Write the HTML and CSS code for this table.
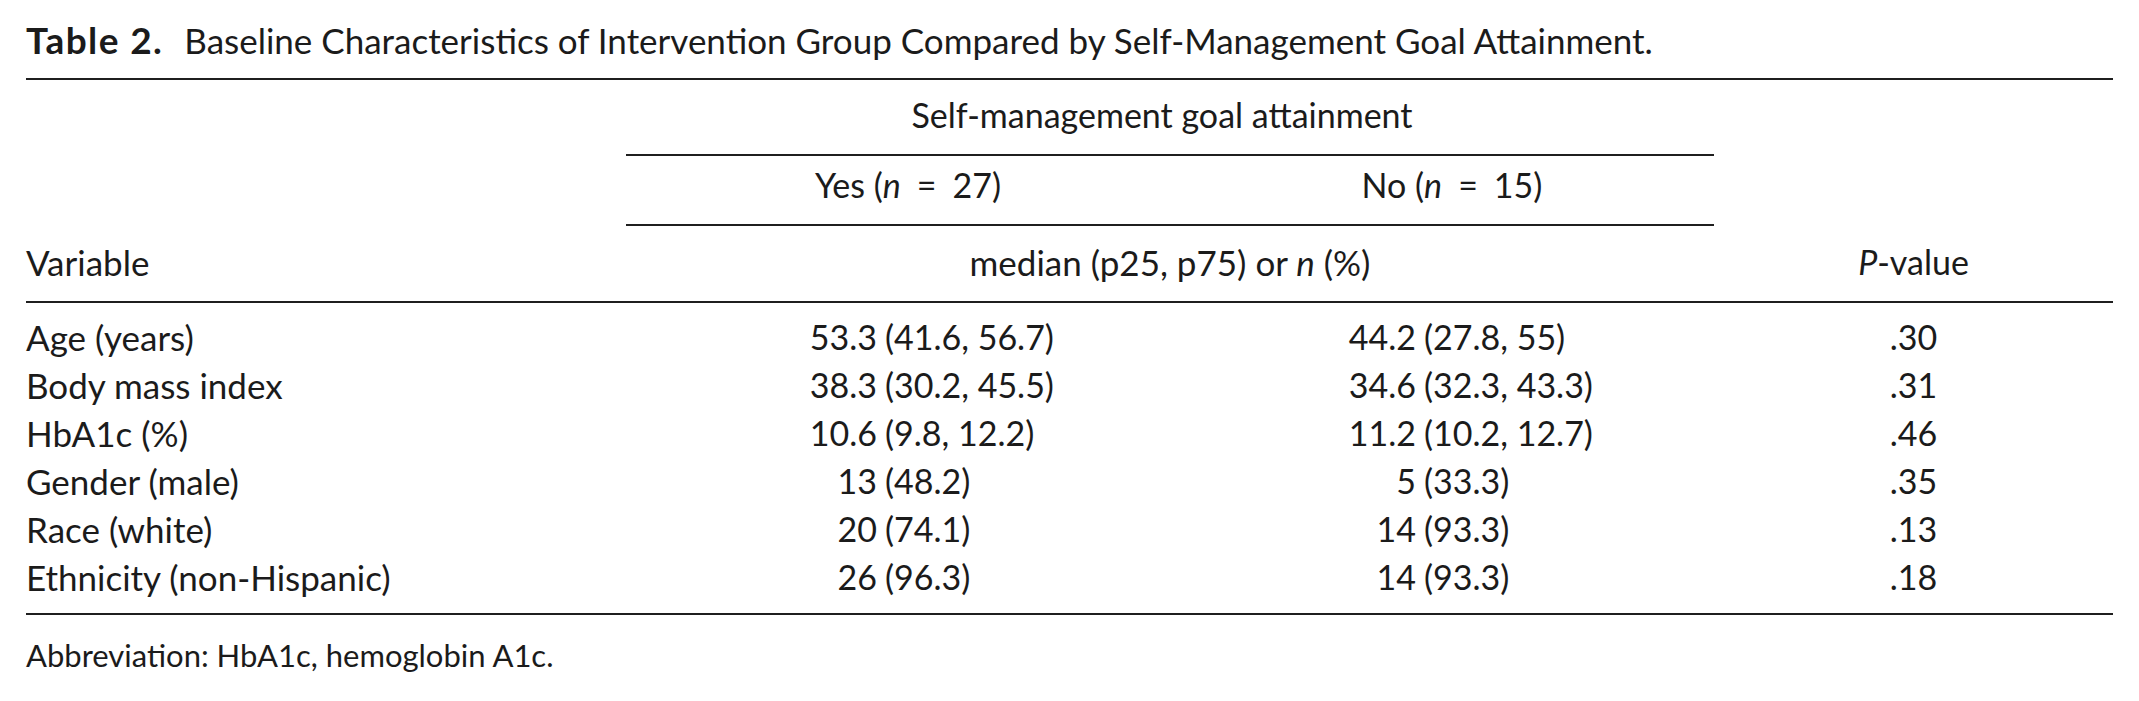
FILE: index.html
```html
<!DOCTYPE html>
<html lang="en">
<head>
<meta charset="utf-8">
<title>Table 2</title>
<link rel="stylesheet" href="styles.css">
</head>
<body>
<div class="figure">
  <p class="caption"><span class="label">Table 2.</span>Baseline Characteristics of Intervention Group Compared by Self-Management Goal Attainment.</p>
  <table class="data">
    <colgroup>
      <col class="c-var">
      <col class="c-yes">
      <col class="c-no">
      <col class="c-p">
    </colgroup>
    <thead>
      <tr class="hr1">
        <th></th>
        <th colspan="2" class="ruled span">Self-management goal attainment</th>
        <th></th>
      </tr>
      <tr class="hr2">
        <th></th>
        <th class="ruled">Yes (<i>n</i><span class="eq">=</span>27)</th>
        <th class="ruled">No (<i>n</i><span class="eq">=</span>15)</th>
        <th></th>
      </tr>
      <tr class="hr3">
        <th class="left wide">Variable</th>
        <th colspan="2" class="wide">median (p25, p75) or <i>n</i> (%)</th>
        <th><i>P</i>-value</th>
      </tr>
    </thead>
    <tbody>
      <tr>
        <td class="left wide">Age (years)</td>
        <td class="yes"><span class="n">53.3</span><span class="r">(41.6, 56.7)</span></td>
        <td class="no"><span class="n">44.2</span><span class="r">(27.8, 55)</span></td>
        <td class="p">.30</td>
      </tr>
      <tr>
        <td class="left wide">Body mass index</td>
        <td class="yes"><span class="n">38.3</span><span class="r">(30.2, 45.5)</span></td>
        <td class="no"><span class="n">34.6</span><span class="r">(32.3, 43.3)</span></td>
        <td class="p">.31</td>
      </tr>
      <tr>
        <td class="left wide">HbA1c (%)</td>
        <td class="yes"><span class="n">10.6</span><span class="r">(9.8, 12.2)</span></td>
        <td class="no"><span class="n">11.2</span><span class="r">(10.2, 12.7)</span></td>
        <td class="p">.46</td>
      </tr>
      <tr>
        <td class="left wide">Gender (male)</td>
        <td class="yes"><span class="n">13</span><span class="r">(48.2)</span></td>
        <td class="no"><span class="n">5</span><span class="r">(33.3)</span></td>
        <td class="p">.35</td>
      </tr>
      <tr>
        <td class="left wide">Race (white)</td>
        <td class="yes"><span class="n">20</span><span class="r">(74.1)</span></td>
        <td class="no"><span class="n">14</span><span class="r">(93.3)</span></td>
        <td class="p">.13</td>
      </tr>
      <tr>
        <td class="left wide">Ethnicity (non-Hispanic)</td>
        <td class="yes"><span class="n">26</span><span class="r">(96.3)</span></td>
        <td class="no"><span class="n">14</span><span class="r">(93.3)</span></td>
        <td class="p">.18</td>
      </tr>
    </tbody>
  </table>
  <p class="note">Abbreviation: HbA1c, hemoglobin A1c.</p>
</div>
</body>
</html>
```

FILE: styles.css
```css
html, body {
  margin: 0;
  padding: 0;
  background: #ffffff;
}

body {
  font-family: Lato, "Liberation Sans", "DejaVu Sans", sans-serif;
  color: #1b1b1b;
}

.figure {
  padding: 16px 26px 0 26px;
}

.caption {
  margin: 0 0 14px 0;
  font-size: 35px;
  line-height: 48px;
  white-space: nowrap;
}

.caption .label {
  font-size: 37px;
  font-weight: 700;
  letter-spacing: 1.4px;
  margin-right: 21px;
}

.data {
  width: 2087px;
  table-layout: fixed;
  border-collapse: separate;
  border-spacing: 0;
  border-top: 2px solid #1f1f1f;
  font-size: 34px;
  line-height: 48px;
}

.c-var { width: 600px; }
.c-yes { width: 564px; }
.c-no { width: 524px; }
.c-p { width: 399px; }

.data th,
.data td {
  padding: 0;
  font-weight: 400;
  text-align: center;
  vertical-align: top;
  white-space: nowrap;
}

.data .wide {
  font-size: 35px;
}

.data i {
  font-style: italic;
}

.data .left {
  text-align: left;
}

.eq {
  display: inline-block;
  margin: 0 16px;
}

.hr1 th {
  padding-top: 11px;
  padding-bottom: 15px;
}

.hr1 th.span {
  padding-right: 16px;
}

.hr2 th {
  padding-top: 5px;
  padding-bottom: 15px;
}

.ruled {
  border-bottom: 2px solid #1f1f1f;
}

.hr1 th:not(.ruled),
.hr2 th:not(.ruled) {
  border-bottom: 2px solid transparent;
}

.hr3 th {
  padding-top: 12px;
  padding-bottom: 15px;
  border-bottom: 2px solid #1f1f1f;
}

.data tbody tr:first-child td {
  padding-top: 10px;
}

.data tbody tr:last-child td {
  padding-bottom: 12px;
  border-bottom: 2px solid #1f1f1f;
}

.data td.yes,
.data td.no {
  text-align: left;
}

.data td.yes {
  padding-left: 151px;
}

.data td.no {
  padding-left: 126px;
}

.n {
  display: inline-block;
  width: 100px;
  text-align: right;
}

.r {
  display: inline-block;
  margin-left: 8px;
}

.note {
  margin: 22px 0 0 0;
  font-size: 31px;
  line-height: 36px;
}
```
